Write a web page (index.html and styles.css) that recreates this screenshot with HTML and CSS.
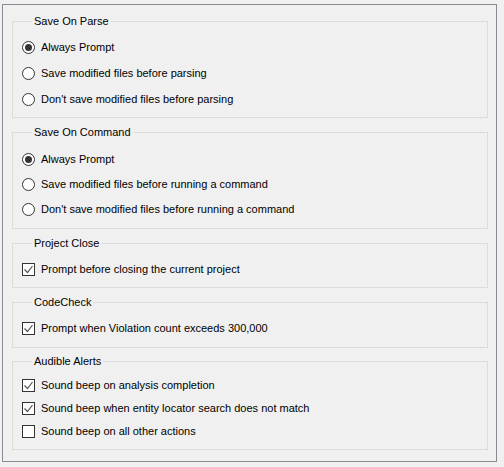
FILE: index.html
```html
<!DOCTYPE html>
<html>
<head>
<meta charset="utf-8">
<link rel="stylesheet" href="styles.css">
</head>
<body>
<div class="panel">
  <fieldset class="group g1">
    <legend>Save On Parse</legend>
    <label class="row"><span class="radio on"></span>Always Prompt</label>
    <label class="row"><span class="radio"></span>Save modified files before parsing</label>
    <label class="row"><span class="radio"></span>Don't save modified files before parsing</label>
  </fieldset>
  <fieldset class="group g2">
    <legend>Save On Command</legend>
    <label class="row"><span class="radio on"></span>Always Prompt</label>
    <label class="row"><span class="radio"></span>Save modified files before running a command</label>
    <label class="row"><span class="radio"></span>Don't save modified files before running a command</label>
  </fieldset>
  <fieldset class="group g3">
    <legend>Project Close</legend>
    <label class="row"><span class="check on"><svg viewBox="0 0 11 11" width="11" height="11"><path d="M1.5 5.5 L4.5 8.5 L9.5 2" /></svg></span>Prompt before closing the current project</label>
  </fieldset>
  <fieldset class="group g4">
    <legend>CodeCheck</legend>
    <label class="row"><span class="check on"><svg viewBox="0 0 11 11" width="11" height="11"><path d="M1.5 5.5 L4.5 8.5 L9.5 2" /></svg></span>Prompt when Violation count exceeds 300,000</label>
  </fieldset>
  <fieldset class="group g5">
    <legend>Audible Alerts</legend>
    <label class="row"><span class="check on"><svg viewBox="0 0 11 11" width="11" height="11"><path d="M1.5 5.5 L4.5 8.5 L9.5 2" /></svg></span>Sound beep on analysis completion</label>
    <label class="row"><span class="check on"><svg viewBox="0 0 11 11" width="11" height="11"><path d="M1.5 5.5 L4.5 8.5 L9.5 2" /></svg></span>Sound beep when entity locator search does not match</label>
    <label class="row"><span class="check"></span>Sound beep on all other actions</label>
  </fieldset>
</div>
</body>
</html>
```
FILE: styles.css
```css
html, body {
  margin: 0;
  padding: 0;
  background: #f0f0f0;
}
body {
  font-family: "Liberation Sans", Arial, sans-serif;
  font-size: 11px;
  color: #000;
}
.panel {
  margin: 4px 0 0 2px;
  width: 495px;
  height: 458px;
  border: 1px solid #8a8a94;
  padding: 10px 8px 0 9px;
  box-sizing: border-box;
  display: flex;
  flex-direction: column;
}
.group {
  margin: 0;
  border: 1px solid #dcdcdc;
  padding: 0 0 10px 9px;
  min-width: 0;
  display: flex;
  flex-direction: column;
}
.group legend {
  margin-left: 10px;
  padding: 0 2px;
  line-height: 13px;
  height: 13px;
}
.row {
  display: flex;
  align-items: center;
  height: 16px;
  line-height: 16px;
  white-space: nowrap;
}
.radio {
  width: 13px;
  height: 13px;
  box-sizing: border-box;
  border: 1px solid #333;
  border-radius: 50%;
  background: #fff;
  margin-right: 6px;
  display: flex;
  align-items: center;
  justify-content: center;
  flex: none;
}
.radio.on::after {
  content: "";
  width: 7px;
  height: 7px;
  border-radius: 50%;
  background: #333;
}
.check {
  width: 13px;
  height: 13px;
  box-sizing: border-box;
  border: 1px solid #333;
  background: #fff;
  margin-right: 6px;
  flex: none;
  display: flex;
  align-items: center;
  justify-content: center;
}
.check svg path {
  fill: none;
  stroke: #555;
  stroke-width: 1.2;
}
.g1 { padding-top: 11px; gap: 10px; padding-bottom: 10px; }
.g2 { margin-top: 8px; padding-top: 12px; gap: 9px; padding-bottom: 11px; }
.g3 { margin-top: 8px; padding-top: 11px; padding-bottom: 10px; }
.g4 { margin-top: 8px; padding-top: 11px; padding-bottom: 11px; }
.g5 { margin-top: 7px; padding-top: 9px; gap: 7px; padding-bottom: 10px; }
```
